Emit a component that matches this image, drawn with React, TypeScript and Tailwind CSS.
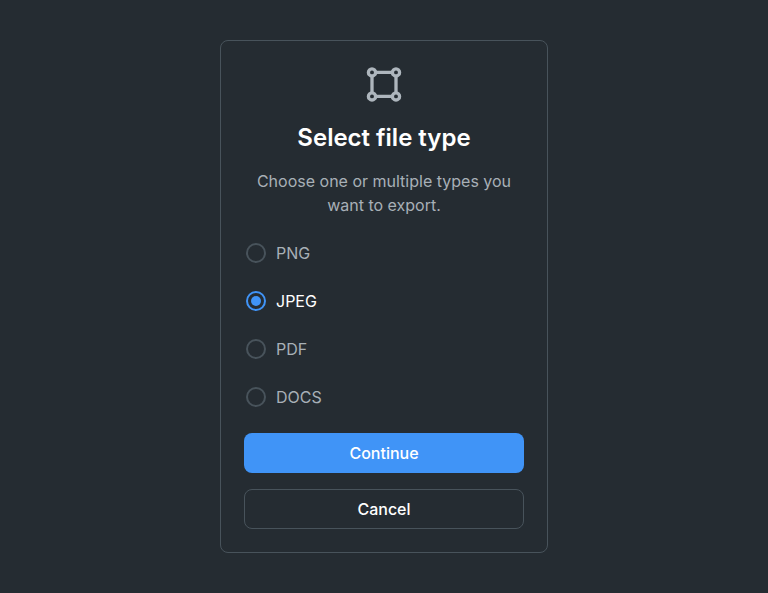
import React, { useState } from "react";

const types = ["PNG", "JPEG", "PDF", "DOCS"];

function FrameIcon() {
  return (
    <svg width="40" height="40" viewBox="0 0 40 40" fill="none" stroke="#aeb6bd" strokeWidth="3.3" className="block">
      <path d="M11 8.4H29M11 32.4H29M8 11.4V29.4M32 11.4V29.4" />
      <circle cx="8" cy="8.4" r="3.6" />
      <circle cx="32" cy="8.4" r="3.6" />
      <circle cx="8" cy="32.4" r="3.6" />
      <circle cx="32" cy="32.4" r="3.6" />
    </svg>
  );
}

export default function App() {
  const [selected, setSelected] = useState("JPEG");
  return (
    <div className="flex h-[593px] w-full flex-col bg-[#252c32] font-['Inter',sans-serif] text-base">
      <main className="mx-auto mt-10 flex h-[513px] w-[328px] flex-col items-center rounded-lg border border-[#48535b] px-[23px] pt-[23px]">
        <FrameIcon />
        <h1 className="mt-4 text-2xl leading-9 font-semibold text-white">Select file type</h1>
        <p className="mt-[13px] text-center leading-6 text-[#a8b0b7]">
          Choose one or multiple types you
          <br />
          want to export.
        </p>
        <div role="radiogroup" className="mt-3 flex w-full flex-col">
          {types.map((type) => (
            <button
              key={type}
              role="radio"
              aria-checked={selected === type}
              onClick={() => setSelected(type)}
              className={`flex h-12 items-center gap-2.5 pl-0.5 ${selected === type ? "text-white" : "text-[#a8b0b7]"}`}
            >
              <span className={`flex size-5 items-center justify-center rounded-full border-2 ${selected === type ? "border-[#4094f7]" : "border-[#48535b]"}`}>
                {selected === type && <span className="size-2.5 rounded-full bg-[#4094f7]" />}
              </span>
              {type}
            </button>
          ))}
        </div>
        <button className="mt-3 h-10 w-full rounded-lg bg-[#4094f7] font-medium text-white">Continue</button>
        <button className="mt-4 h-10 w-full rounded-lg border border-[#48535b] font-medium text-white">Cancel</button>
      </main>
    </div>
  );
}
